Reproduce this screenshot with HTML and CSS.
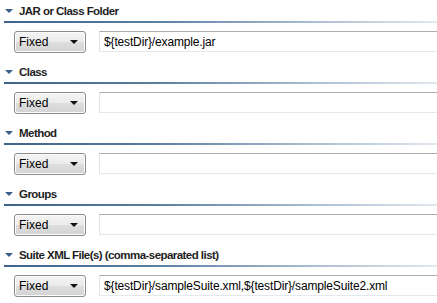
FILE: index.html
```html
<!DOCTYPE html>
<html lang="en">
<head>
  <meta charset="UTF-8">
  <title>TestNG</title>
  <link rel="stylesheet" href="styles.css">
</head>
<body>

  <div class="section">
    <div class="section-title"><span class="twisty"></span>JAR or Class Folder</div>
    <div class="title-rule"></div>
    <div class="row">
      <div class="combo">Fixed<span class="arrow"></span></div>
      <div class="field">${testDir}/example.jar</div>
    </div>
  </div>

  <div class="section">
    <div class="section-title"><span class="twisty"></span>Class</div>
    <div class="title-rule"></div>
    <div class="row">
      <div class="combo">Fixed<span class="arrow"></span></div>
      <div class="field"></div>
    </div>
  </div>

  <div class="section">
    <div class="section-title"><span class="twisty"></span>Method</div>
    <div class="title-rule"></div>
    <div class="row">
      <div class="combo">Fixed<span class="arrow"></span></div>
      <div class="field"></div>
    </div>
  </div>

  <div class="section">
    <div class="section-title"><span class="twisty"></span>Groups</div>
    <div class="title-rule"></div>
    <div class="row">
      <div class="combo">Fixed<span class="arrow"></span></div>
      <div class="field"></div>
    </div>
  </div>

  <div class="section">
    <div class="section-title"><span class="twisty"></span>Suite XML File(s) (comma-separated list)</div>
    <div class="title-rule"></div>
    <div class="row">
      <div class="combo">Fixed<span class="arrow"></span></div>
      <div class="field">${testDir}/sampleSuite.xml,${testDir}/sampleSuite2.xml</div>
    </div>
  </div>

</body>
</html>
```

FILE: styles.css
```css
body {
  margin: 0;
  background-color: #ffffff;
  font-family: 'Liberation Sans', Arial, sans-serif;
  font-size: 12px;
  color: #000;
  overflow: hidden;
}

.section {
  display: flex;
  flex-direction: column;
}

.section-title {
  height: 21px;
  display: flex;
  align-items: center;
  padding-left: 5px;
  font-size: 11.5px;
  font-weight: bold;
  letter-spacing: -0.55px;
  color: #1e1e1e;
  white-space: nowrap;
}

.twisty {
  width: 0;
  height: 0;
  border-left: 4px solid transparent;
  border-right: 4px solid transparent;
  border-top: 4px solid #3b5f8c;
  margin-right: 6px;
  margin-top: 1px;
}

.title-rule {
  height: 2px;
  margin-left: 4px;
  background: linear-gradient(to right, #3f6389 0%, #5b7ea3 35%, #a8bbcf 70%, #e1e8f0 100%);
}

.row {
  display: flex;
  align-items: flex-start;
  gap: 13px;
  padding: 8px 0 8px 14px;
}

.combo {
  box-sizing: border-box;
  width: 72px;
  height: 22px;
  flex-shrink: 0;
  border: 1px solid #8d8d8d;
  border-radius: 3px;
  background: linear-gradient(to bottom, #f4f4f4 0%, #ebebeb 50%, #dedede 51%, #d3d3d3 100%);
  box-shadow: inset 0 0 0 1px #fbfbfb;
  display: flex;
  align-items: center;
  justify-content: space-between;
  padding: 0 7px 0 4px;
}

.arrow {
  width: 0;
  height: 0;
  border-left: 4px solid transparent;
  border-right: 4px solid transparent;
  border-top: 4px solid #111;
}

.field {
  box-sizing: border-box;
  flex: 1;
  height: 21px;
  margin-right: -4px;
  border: 1px solid #e2e3ea;
  border-top-color: #abadb3;
  border-bottom-color: #e3e9ef;
  display: flex;
  align-items: center;
  padding-left: 4px;
  white-space: nowrap;
  letter-spacing: -0.15px;
}
```
